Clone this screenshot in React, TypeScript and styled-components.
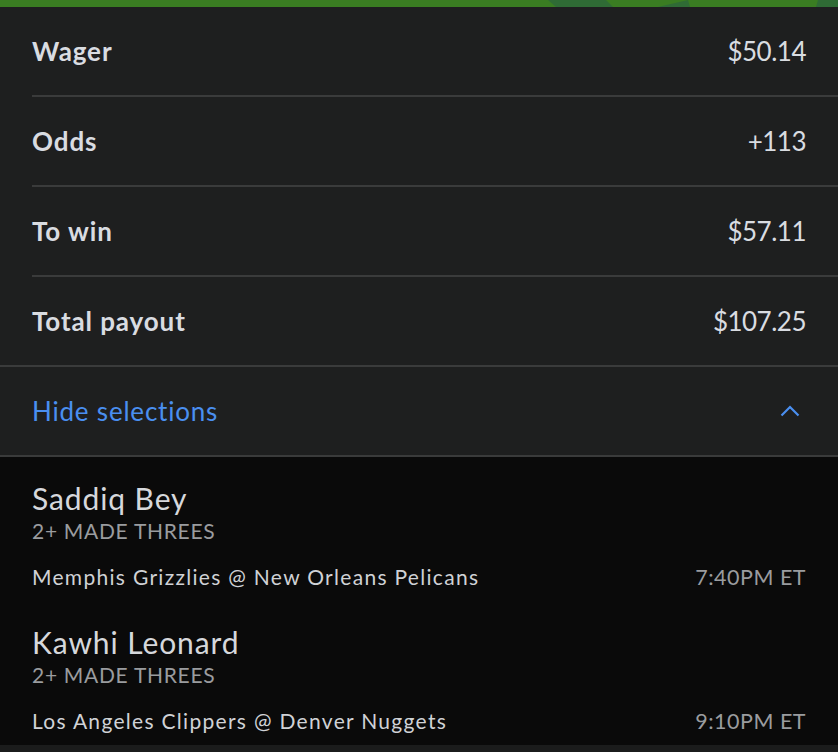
import React from 'react';
import styled, { createGlobalStyle } from 'styled-components';

const GlobalStyle = createGlobalStyle`
  body {
    margin: 0;
    background: #1c1d1d;
    font-family: Lato, 'Open Sans', sans-serif;
    -webkit-font-smoothing: antialiased;
  }
`;

const Page = styled.div`
  width: 838px;
  height: 752px;
  overflow: hidden;
  background: #1e1f1f;
  display: flex;
  flex-direction: column;
`;

const TopStrip = styled.div`
  height: 7px;
  background: #3a7d22;
  flex-shrink: 0;
  svg {
    display: block;
  }
`;

const Summary = styled.div`
  border-bottom: 2px solid #3a3b3b;
`;

const Row = styled.div<{ last?: boolean }>`
  height: 88px;
  margin-left: 32px;
  padding-right: 32px;
  display: flex;
  align-items: center;
  justify-content: space-between;
  border-bottom: ${(p) => (p.last ? 'none' : '2px solid #3a3b3b')};
`;

const Label = styled.span`
  font-size: 26px;
  font-weight: 700;
  letter-spacing: 0.9px;
  color: #d9dce1;
`;

const Value = styled.span`
  font-size: 26px;
  font-weight: 400;
  letter-spacing: -0.5px;
  color: #d9dce1;
`;

const Toggle = styled.div`
  height: 88px;
  padding: 0 38px 0 32px;
  display: flex;
  align-items: center;
  justify-content: space-between;
  border-bottom: 2px solid #3a3b3b;
  cursor: pointer;
`;

const ToggleText = styled.span`
  font-size: 26px;
  letter-spacing: 0.8px;
  color: #4a8ff0;
`;

const Selections = styled.div`
  flex: 1;
  background: #0a0a0a;
  padding: 24px 32px 10px;
  display: flex;
  flex-direction: column;
  gap: 34px;
`;

const Leg = styled.div`
  display: flex;
  flex-direction: column;
`;

const Player = styled.div`
  font-size: 30px;
  line-height: 34px;
  letter-spacing: 0.9px;
  color: #d6d8dc;
`;

const Market = styled.div`
  font-size: 21px;
  line-height: 32px;
  letter-spacing: 0.7px;
  text-transform: uppercase;
  color: #9a9c9f;
`;

const GameRow = styled.div`
  margin-top: 16px;
  line-height: 28px;
  display: flex;
  justify-content: space-between;
  align-items: center;
`;

const Game = styled.span`
  font-size: 21px;
  letter-spacing: 1.3px;
  color: #d0d2d6;
`;

const Time = styled.span`
  font-size: 21.5px;
  letter-spacing: 0.5px;
  color: #9a9c9f;
`;

const BottomStrip = styled.div`
  height: 7px;
  background: #1b1c1c;
  flex-shrink: 0;
`;

const summary = [
  { label: 'Wager', value: '$50.14' },
  { label: 'Odds', value: '+113' },
  { label: 'To win', value: '$57.11' },
  { label: 'Total payout', value: '$107.25' },
];

const legs = [
  {
    player: 'Saddiq Bey',
    market: '2+ Made Threes',
    game: 'Memphis Grizzlies @ New Orleans Pelicans',
    time: '7:40PM ET',
  },
  {
    player: 'Kawhi Leonard',
    market: '2+ Made Threes',
    game: 'Los Angeles Clippers @ Denver Nuggets',
    time: '9:10PM ET',
  },
];

const ChevronUp = () => (
  <svg width="20" height="12" viewBox="0 0 20 12" fill="none">
    <path d="M1.5 10.5 L10 2 L18.5 10.5" stroke="#4a8ff0" strokeWidth="2.2" />
  </svg>
);

export default function App() {
  return (
    <Page>
      <GlobalStyle />
      <TopStrip>
        <svg width="838" height="7" viewBox="0 0 838 7">
          <polygon points="548,0 606,0 613,7 556,7" fill="#2f6b35" />
          <polygon points="688,0 690,7 658,7" fill="#2f6b35" />
          <polygon points="818,0 838,0 838,7 816,7" fill="#2f6b35" />
        </svg>
      </TopStrip>
      <Summary>
        {summary.map((s, i) => (
          <Row key={s.label} last={i === summary.length - 1}>
            <Label>{s.label}</Label>
            <Value>{s.value}</Value>
          </Row>
        ))}
      </Summary>
      <Toggle>
        <ToggleText>Hide selections</ToggleText>
        <ChevronUp />
      </Toggle>
      <Selections>
        {legs.map((l) => (
          <Leg key={l.player}>
            <Player>{l.player}</Player>
            <Market>{l.market}</Market>
            <GameRow>
              <Game>{l.game}</Game>
              <Time>{l.time}</Time>
            </GameRow>
          </Leg>
        ))}
      </Selections>
      <BottomStrip />
    </Page>
  );
}
